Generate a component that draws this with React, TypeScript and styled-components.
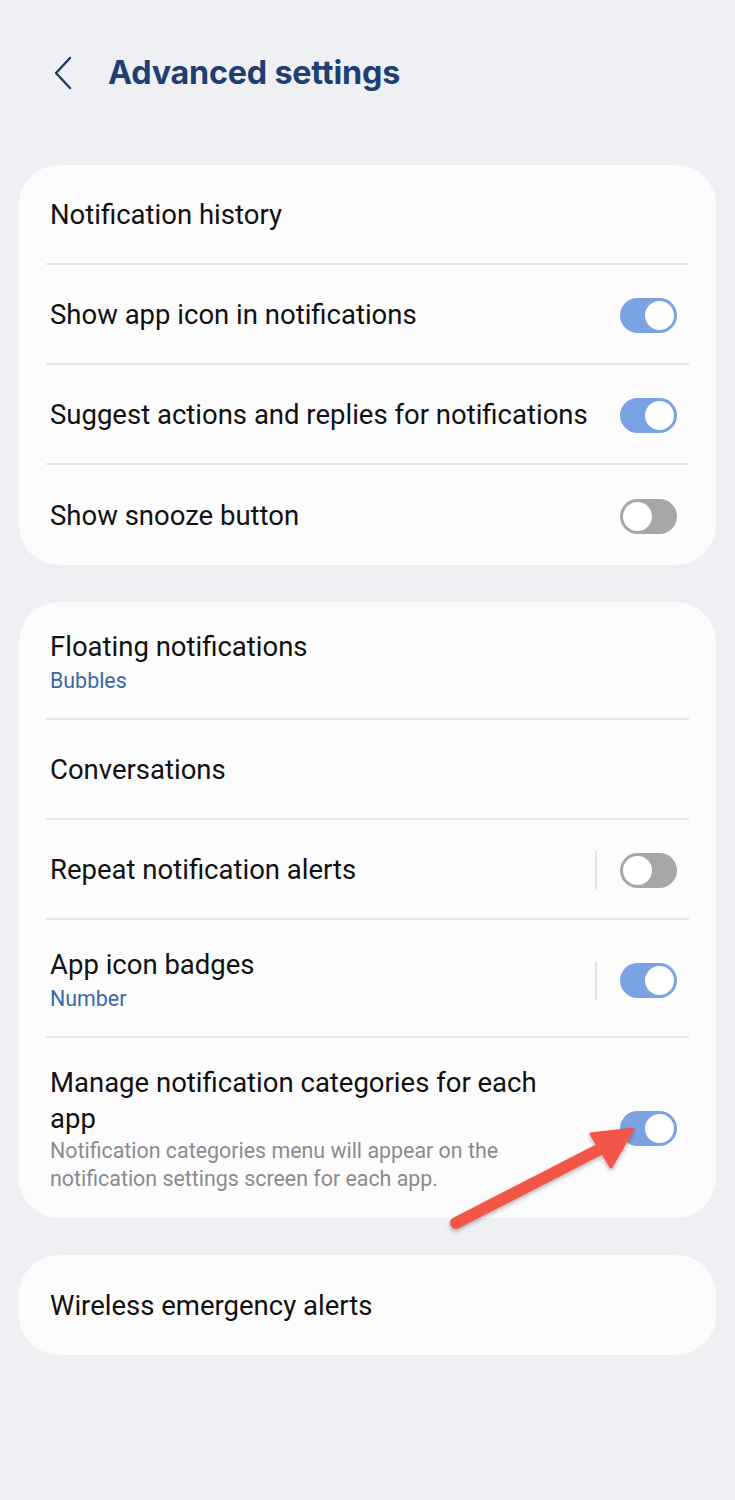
import React from 'react'
import styled, { createGlobalStyle } from 'styled-components'

const GlobalStyle = createGlobalStyle`
  html, body {
    margin: 0;
    padding: 0;
    background: #eff0f4;
  }
  body {
    font-family: 'Roboto', 'Liberation Sans', sans-serif;
    color: #111;
  }
`

type Item = {
  title: string
  sub?: string
  desc?: string
  toggle?: boolean
  divider?: boolean
  pointer?: boolean
}

const groups: Item[][] = [
  [
    { title: 'Notification history' },
    { title: 'Show app icon in notifications', toggle: true },
    { title: 'Suggest actions and replies for notifications', toggle: true },
    { title: 'Show snooze button', toggle: false },
  ],
  [
    { title: 'Floating notifications', sub: 'Bubbles' },
    { title: 'Conversations' },
    { title: 'Repeat notification alerts', toggle: false, divider: true },
    { title: 'App icon badges', sub: 'Number', toggle: true, divider: true },
    {
      title: 'Manage notification categories for each app',
      desc: 'Notification categories menu will appear on the notification settings screen for each app.',
      toggle: true,
      pointer: true,
    },
  ],
  [{ title: 'Wireless emergency alerts' }],
]

export default function App(): React.ReactElement {
  return (
    <>
      <GlobalStyle />
      <Page>
        <Header>
          <BackButton>
            <svg width="20" height="34" viewBox="0 0 20 34">
              <path d="M17 2 L3 17 L17 32" fill="none" stroke="#1d3a66" strokeWidth="2.4" strokeLinecap="round" strokeLinejoin="round" />
            </svg>
          </BackButton>
          <Title>Advanced settings</Title>
        </Header>
        {groups.map((items, gi) => (
          <Card key={gi}>
            {items.map((item, i) => (
              <Row key={i} $last={i === items.length - 1} $tall={!!(item.sub || item.desc)}>
                <Texts $narrow={!!item.desc}>
                  <RowTitle>{item.title}</RowTitle>
                  {item.sub && <Sub>{item.sub}</Sub>}
                  {item.desc && <Desc>{item.desc}</Desc>}
                </Texts>
                {item.divider && <VLine />}
                {item.toggle !== undefined && (
                  <ToggleWrap $raised={!!item.desc}>
                    <Switch $on={item.toggle}>
                      <Knob $on={item.toggle} />
                    </Switch>
                    {item.pointer && (
                      <Arrow width="240" height="160" viewBox="0 0 240 160">
                        <defs>
                          <filter id="sh" x="-20%" y="-20%" width="140%" height="140%">
                            <feDropShadow dx="0" dy="2" stdDeviation="2" floodColor="#000" floodOpacity="0.3" />
                          </filter>
                        </defs>
                        <g filter="url(#sh)">
                          <path d="M36 132 L188 54" stroke="#f1564a" strokeWidth="12" strokeLinecap="round" fill="none" />
                          <path d="M213 38 L171 43 L191 76 Z" fill="#f1564a" stroke="#f1564a" strokeWidth="3" strokeLinejoin="round" />
                        </g>
                      </Arrow>
                    )}
                  </ToggleWrap>
                )}
              </Row>
            ))}
          </Card>
        ))}
      </Page>
    </>
  )
}

const Page = styled.div`
  width: 735px;
  min-height: 1500px;
  padding: 0 19px;
  box-sizing: border-box;
  display: flex;
  flex-direction: column;
  gap: 37px;
`

const Header = styled.div`
  height: 128px;
  display: flex;
  align-items: center;
  gap: 33px;
  padding-left: 34px;
  padding-top: 17px;
  box-sizing: border-box;
`

const BackButton = styled.div`
  display: flex;
  align-items: center;
  width: 22px;
`

const Title = styled.div`
  font-family: 'Inter', 'Roboto', sans-serif;
  font-weight: 700;
  font-size: 32.3px;
  color: #1d3f72;
  letter-spacing: -0.2px;
`

const Card = styled.div`
  background: #fcfcfd;
  border-radius: 40px;
  padding: 0 27px;
`

const Row = styled.div<{ $last: boolean; $tall: boolean }>`
  display: flex;
  align-items: center;
  min-height: ${(p) => (p.$tall ? 118 : 100)}px;
  padding: ${(p) => (p.$tall ? '27px 0 22px' : '2px 0 0')};
  box-sizing: border-box;
  border-bottom: ${(p) => (p.$last ? 'none' : '2px solid #e6e7ea')};
  position: relative;
`

const Texts = styled.div<{ $narrow: boolean }>`
  flex: 1;
  display: flex;
  flex-direction: column;
  padding-left: 4px;
  padding-right: ${(p) => (p.$narrow ? 50 : 24)}px;
`

const RowTitle = styled.div`
  font-size: 27.5px;
  line-height: 36px;
  color: #111;
`

const Sub = styled.div`
  font-size: 21.4px;
  line-height: 31px;
  color: #3a68a6;
`

const Desc = styled.div`
  font-size: 21.4px;
  line-height: 28px;
  padding-bottom: 3px;
  color: #8a8b8e;
`

const VLine = styled.div`
  width: 2px;
  height: 38px;
  background: #e3e4e7;
  margin-right: 23px;
`

const ToggleWrap = styled.div<{ $raised: boolean }>`
  position: relative;
  padding-right: 12px;
  margin-top: ${(p) => (p.$raised ? -5 : 0)}px;
`

const Switch = styled.div<{ $on: boolean }>`
  width: 57px;
  height: 35px;
  border-radius: 18px;
  background: ${(p) => (p.$on ? '#7ba3e4' : '#a6a7a9')};
  position: relative;
  box-sizing: border-box;
`

const Knob = styled.div<{ $on: boolean }>`
  position: absolute;
  top: 3px;
  left: ${(p) => (p.$on ? '25px' : '3px')};
  width: 29px;
  height: 29px;
  border-radius: 50%;
  background: #fff;
`

const Arrow = styled.svg`
  position: absolute;
  left: -200px;
  top: -20px;
  pointer-events: none;
  overflow: visible;
`
